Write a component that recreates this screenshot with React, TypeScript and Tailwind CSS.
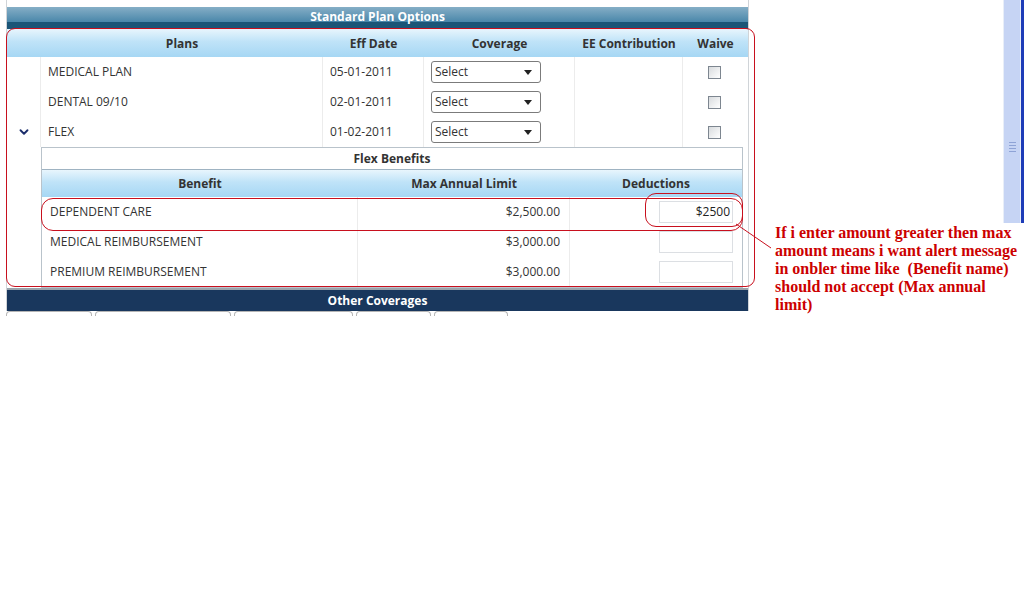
import React from 'react';
import { ChevronDown } from 'lucide-react';

const plans = [
  { name: 'MEDICAL PLAN', date: '05-01-2011' },
  { name: 'DENTAL 09/10', date: '02-01-2011' },
  { name: 'FLEX', date: '01-02-2011', open: true },
];

const benefits = [
  { name: 'DEPENDENT CARE', limit: '$2,500.00', value: '$2500' },
  { name: 'MEDICAL REIMBURSEMENT', limit: '$3,000.00', value: '' },
  { name: 'PREMIUM REIMBURSEMENT', limit: '$3,000.00', value: '' },
];

const headBg = 'bg-[linear-gradient(#e8f5fd,#bfe3f8_45%,#a6d7f4)]';

const SelectBox = () => (
  <div className="w-[110px] h-[22px] bg-white border border-[#7b7b7b] rounded-[3px] flex items-center justify-between pl-[3px] pr-[8px] text-[12px] text-[#333]">
    <span>Select</span>
    <svg width="8" height="5" viewBox="0 0 8 5"><path d="M0 0h8L4 5z" fill="#222" /></svg>
  </div>
);

const Checkbox = () => (
  <div className="w-[13px] h-[13px] border border-[#7d8690] bg-[linear-gradient(135deg,#d8dbde,#ffffff)]" />
);

const App: React.FC = () => {
  return (
    <div className="relative w-[1026px] h-[606px] bg-white overflow-hidden font-['Open_Sans','Noto_Sans',sans-serif] text-[12px] text-[#333]">
      {/* Main panel */}
      <div className="ml-[6px] w-[743px] pt-[7px] border-x border-[#d0d4d8]">
        <div className="h-[22px] bg-[linear-gradient(#85aec6,#4a87aa_68%,#1b5577_68%)] text-white font-bold text-center leading-[20px]">
          Standard Plan Options
        </div>

        {/* Plans table */}
        <div className="grid grid-cols-[34px_282px_101px_151px_108px_1fr]">
          <div className={`h-[28px] ${headBg}`} />
          {['Plans', 'Eff Date', 'Coverage', 'EE Contribution', 'Waive'].map((h) => (
            <div key={h} className={`h-[28px] ${headBg} flex items-center justify-center pt-[1px] font-bold text-[#333]`}>
              {h}
            </div>
          ))}
          {plans.map((p) => (
            <React.Fragment key={p.name}>
              <div className="h-[30px] flex items-center justify-center border-r border-[#ececec]">
                {p.open && <ChevronDown size={14} strokeWidth={3.2} className="text-[#1b2d6b]" />}
              </div>
              <div className="h-[30px] flex items-center pl-[7px] border-r border-[#ececec]">{p.name}</div>
              <div className="h-[30px] flex items-center pl-[7px] border-r border-[#ececec]">{p.date}</div>
              <div className="h-[30px] flex items-center pl-[7px] border-r border-[#ececec]">
                <SelectBox />
              </div>
              <div className="h-[30px] border-r border-[#ececec]" />
              <div className="h-[30px] flex items-center justify-center pr-[2px]">
                <Checkbox />
              </div>
            </React.Fragment>
          ))}
        </div>

        {/* Flex Benefits */}
        <div className="ml-[34px] w-[702px] border border-[#b9c3cb]">
          <div className="h-[21px] flex items-center justify-center font-bold bg-white">Flex Benefits</div>
          <div className="grid grid-cols-[316px_212px_1fr] border-t border-[#9fb3c2]">
            {['Benefit', 'Max Annual Limit', 'Deductions'].map((h) => (
              <div key={h} className={`h-[27px] ${headBg} flex items-center justify-center font-bold`}>
                {h}
              </div>
            ))}
            {benefits.map((b) => (
              <React.Fragment key={b.name}>
                <div className="h-[30px] flex items-center pl-[8px] border-r border-[#ececec]">{b.name}</div>
                <div className="h-[30px] flex items-center justify-end pr-[9px] border-r border-[#ececec]">{b.limit}</div>
                <div className="h-[30px] flex items-center justify-end pr-[9px]">
                  <div className="w-[74px] h-[22px] border border-[#dcdfe3] bg-white flex items-center justify-end pr-[2px] text-[#222]">
                    {b.value}
                  </div>
                </div>
              </React.Fragment>
            ))}
          </div>
        </div>

        <div className="h-[2px] bg-[#9aa3ab]" />
        <div className="h-[21px] bg-[#19375d] text-white font-bold text-center leading-[21px]">Other Coverages</div>
      </div>

      {/* tabs peeking below */}
      <div className="ml-[6px] flex gap-[3px]">
        {[86, 136, 119, 75, 74].map((w, i) => (
          <div key={i} style={{ width: w }} className="h-[5px] border-t border-x border-[#b5b5b5] rounded-t-[4px]" />
        ))}
      </div>

      {/* Red annotations */}
      <div className="absolute left-[6px] top-[28px] w-[749px] h-[259px] border border-[#c8101e] rounded-[9px] pointer-events-none" />
      <div className="absolute left-[41px] top-[198px] w-[702px] h-[33px] border border-[#c8101e] rounded-[12px] pointer-events-none" />
      <div className="absolute left-[645px] top-[193px] w-[98px] h-[34px] border border-[#c8101e] rounded-[11px] pointer-events-none" />
      <svg className="absolute left-0 top-0 pointer-events-none" width="1026" height="606">
        <line x1="736" y1="224" x2="771" y2="248" stroke="#c8101e" strokeWidth="1" />
      </svg>
      <div className="absolute left-[775px] top-[224px] w-[251px] font-['Liberation_Serif',serif] font-bold text-[16px] leading-[18px] text-[#cc0000] whitespace-pre">
        {'If i enter amount greater then max\namount means i want alert message\nin onbler time like  (Benefit name)\nshould not accept (Max annual\nlimit)'}
      </div>

      {/* window scrollbar */}
      <div className="absolute left-[1003px] top-0 h-[223px] flex">
        <div className="w-[1px] bg-[#e8eef8]" />
        <div className="w-[16px] bg-[#c6d4f4] flex items-center justify-center">
          <div className="mt-[70px] flex flex-col gap-[2px]">
            <div className="w-[7px] h-[1px] bg-[#8ea3d6]" />
            <div className="w-[7px] h-[1px] bg-[#8ea3d6]" />
            <div className="w-[7px] h-[1px] bg-[#8ea3d6]" />
            <div className="w-[7px] h-[1px] bg-[#8ea3d6]" />
          </div>
        </div>
        <div className="w-[1px] bg-[#e6ecf8]" />
        <div className="w-[3px] bg-[#1d3cb8]" />
      </div>
    </div>
  );
};

export default App;
